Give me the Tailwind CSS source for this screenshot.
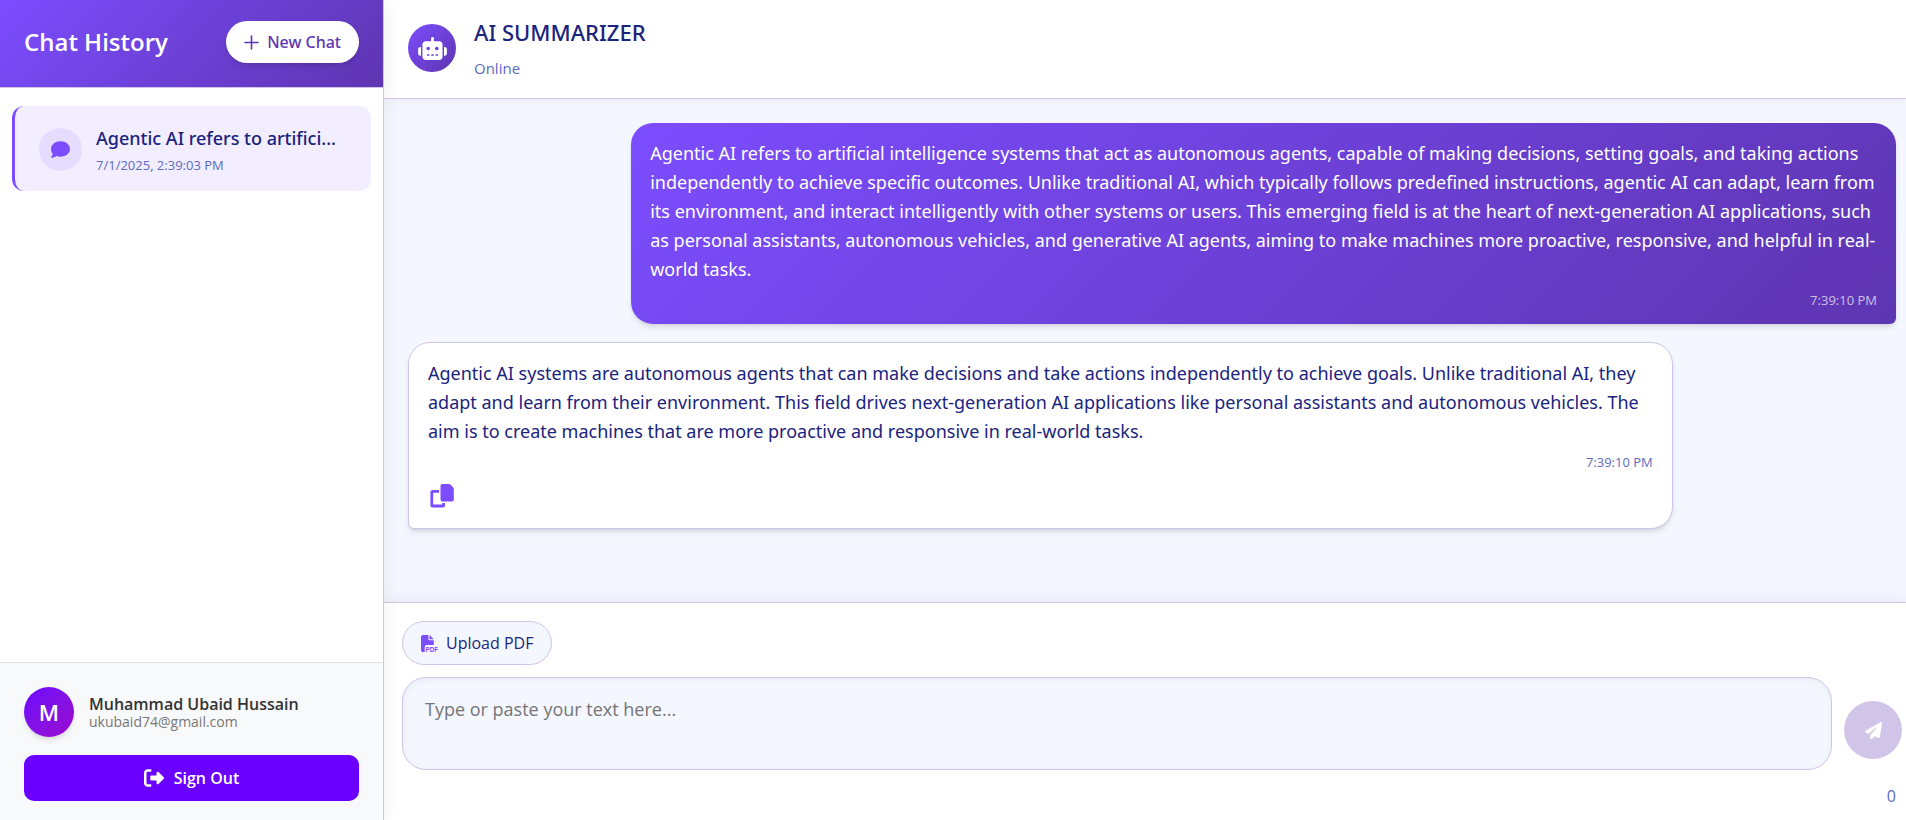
<!DOCTYPE html>
<html lang="en">
  <head>
    <meta charset="UTF-8" />
    <meta name="viewport" content="width=device-width, initial-scale=1.0" />
    <title>AI Summarizer</title>
    <script src="https://cdn.jsdelivr.net/npm/@tailwindcss/browser@4"></script>
  </head>

  <body class="flex h-screen overflow-hidden bg-white font-['Segoe_UI','Open_Sans',sans-serif] text-[#1a237e]">
    <!-- Sidebar -->
    <aside class="relative z-10 flex w-96 shrink-0 flex-col border-r border-[#d1c4e9] bg-white shadow-[2px_0_15px_rgba(0,0,0,0.06)]">
      <div class="flex h-[88px] items-center justify-between border-b border-[#d1c4e9] bg-linear-135 from-[#7c4dff] to-[#5e35b1] px-6 pb-[3px]">
        <h2 class="text-2xl font-semibold text-white">Chat History</h2>
        <button class="flex h-[42px] items-center gap-2 rounded-full bg-white px-[18px] font-['Noto_Sans',sans-serif] text-base font-medium text-[#5e35b1] shadow-md">
          <svg class="h-[15px] w-[15px]" viewBox="0 0 15 15" fill="none" stroke="currentColor" stroke-width="1.6" stroke-linecap="round">
            <path d="M7.5 1v13M1 7.5h13" />
          </svg>
          New Chat
        </button>
      </div>

      <nav class="flex-1 px-3 py-[18px]">
        <a href="#" class="flex items-center gap-[14px] rounded-xl border-l-3 border-[#7c4dff] bg-[#f2edff] pt-4 pr-6 pb-[15px] pl-6">
          <span class="flex h-[43px] w-[43px] shrink-0 items-center justify-center rounded-full bg-[#e6dcff] text-[#7c4dff]">
            <svg class="h-[19px] w-[19px]" viewBox="0 0 512 512" fill="currentColor">
              <path d="M512 240c0 114.9-114.6 208-256 208c-37.1 0-72.3-6.4-104.1-17.9c-11.9 8.7-31.3 20.6-54.3 30.6C73.6 471.1 44.7 480 16 480c-6.5 0-12.3-3.9-14.8-9.9s-1.1-12.8 3.4-17.4c22-24 37-50 43-84C17.700 333 0 288 0 240C0 125.100 114.600 32 256 32s256 93.100 256 208z" />
            </svg>
          </span>
          <span>
            <span class="block font-['Noto_Sans',sans-serif] text-lg leading-8 font-medium whitespace-nowrap">Agentic AI refers to artifici...</span>
            <span class="block text-[13px] leading-[22px] text-[#5c6bc0]">7/1/2025, 2:39:03 PM</span>
          </span>
        </a>
      </nav>

      <div class="border-t border-[#dee2e6] bg-[#f8f9fb] px-6 pt-6 pb-[19px]">
        <div class="flex items-center gap-[15px]">
          <div class="flex h-[50px] w-[50px] items-center justify-center rounded-full bg-linear-135 from-[#6a00ff] to-[#9c00cc] text-[22px] font-semibold text-white shadow-md">M</div>
          <div>
            <p class="text-base leading-5 font-semibold text-[#333333]">Muhammad Ubaid Hussain</p>
            <p class="text-sm leading-4 text-[#777777]">ukubaid74@gmail.com</p>
          </div>
        </div>
        <button class="mt-[18px] flex h-[46px] w-full items-center justify-center gap-[10px] rounded-[10px] bg-[#6a00ff] text-base font-semibold text-white">
          <svg class="h-5 w-5" viewBox="0 0 512 512" fill="currentColor">
            <path d="M377.900 105.900L500.700 228.700c7.200 7.200 11.300 17.100 11.300 27.300s-4.100 20.100-11.300 27.300L377.900 406.100c-6.400 6.400-15 9.900-24 9.900c-18.700 0-33.900-15.200-33.900-33.900l0-62.100-128 0c-17.700 0-32-14.300-32-32l0-64c0-17.700 14.300-32 32-32l128 0 0-62.100c0-18.700 15.200-33.900 33.900-33.900c9 0 17.600 3.600 24 9.900zM160 96L96 96c-17.700 0-32 14.300-32 32l0 256c0 17.700 14.300 32 32 32l64 0c17.700 0 32 14.300 32 32s-14.300 32-32 32l-64 0c-53 0-96-43-96-96L0 128C0 75 43 32 96 32l64 0c17.700 0 32 14.300 32 32s-14.300 32-32 32z" />
          </svg>
          Sign Out
        </button>
      </div>
    </aside>

    <!-- Chat -->
    <main class="flex min-w-0 flex-1 flex-col bg-[#f4f7ff]">
      <header class="relative flex h-[99px] items-center gap-[18px] border-b border-[#d1c4e9] bg-white px-6 pb-0.5 shadow-[0_2px_10px_rgba(0,0,0,0.04)]">
        <div class="flex h-12 w-12 items-center justify-center rounded-full bg-linear-135 from-[#7c4dff] to-[#5e35b1] text-white">
          <svg class="h-[23px] w-[29px]" viewBox="0 0 640 512" fill="currentColor">
            <path d="M320 0c17.700 0 32 14.300 32 32V96H472c39.800 0 72 32.200 72 72V440c0 39.800-32.200 72-72 72H168c-39.800 0-72-32.200-72-72V168c0-39.800 32.200-72 72-72H288V32c0-17.700 14.300-32 32-32zM208 384c-8.800 0-16 7.200-16 16s7.200 16 16 16h32c8.800 0 16-7.200 16-16s-7.200-16-16-16H208zm96 0c-8.800 0-16 7.200-16 16s7.200 16 16 16h32c8.800 0 16-7.200 16-16s-7.200-16-16-16H304zm96 0c-8.800 0-16 7.200-16 16s7.200 16 16 16h32c8.800 0 16-7.200 16-16s-7.200-16-16-16H400zM264 256a40 40 0 1 0 -80 0 40 40 0 1 0 80 0zm152 40a40 40 0 1 0 0-80 40 40 0 1 0 0 80zM48 224H64V416H48c-26.500 0-48-21.500-48-48V272c0-26.500 21.500-48 48-48zm544 0c26.500 0 48 21.500 48 48v96c0 26.500-21.500 48-48 48H576V224h16z" />
          </svg>
        </div>
        <div>
          <h1 class="font-['Noto_Sans',sans-serif] text-[22px] leading-8 font-medium">AI SUMMARIZER</h1>
          <p class="mt-2 text-[15px] leading-6 text-[#5c6bc0]">Online</p>
        </div>
      </header>

      <section class="flex flex-1 flex-col gap-[18px] overflow-hidden py-6 pr-[10px] pl-6">
        <div class="w-[85%] self-end rounded-[22px] rounded-br-md bg-linear-135 from-[#7c4dff] to-[#5e35b1] px-[19px] py-4 text-white shadow-md">
          <p class="font-['Noto_Sans',sans-serif] text-[18px] leading-[29px]">Agentic AI refers to artificial intelligence systems that act as autonomous agents, capable of making decisions, setting goals, and taking actions independently to achieve specific outcomes. Unlike traditional AI, which typically follows predefined instructions, agentic AI can adapt, learn from its environment, and interact intelligently with other systems or users. This emerging field is at the heart of next-generation AI applications, such as personal assistants, autonomous vehicles, and generative AI agents, aiming to make machines more proactive, responsive, and helpful in real-world tasks.</p>
          <p class="mt-2 text-right text-[13px] leading-4 text-white/70">7:39:10 PM</p>
        </div>

        <div class="w-[85%] rounded-[22px] rounded-bl-md border border-[#d1c4e9] bg-white px-[19px] py-4 shadow-md">
          <p class="font-['Noto_Sans',sans-serif] text-[18px] leading-[29px]">Agentic AI systems are autonomous agents that can make decisions and take actions independently to achieve goals. Unlike traditional AI, they adapt and learn from their environment. This field drives next-generation AI applications like personal assistants and autonomous vehicles. The aim is to create machines that are more proactive and responsive in real-world tasks.</p>
          <p class="mt-2 text-right text-[13px] leading-4 text-[#5c6bc0]">7:39:10 PM</p>
          <button aria-label="Copy" class="mt-[14px] mb-1 ml-0.5 block text-[#7c4dff]">
            <svg class="h-6 w-6" viewBox="0 0 24 24" fill="currentColor">
              <path d="M12.500 0h6.500q.8 0 1.400.6l2.800 2.800q.6.600.6 1.400v10.700q0 2-2 2h-9.300q-2 0-2-2V2q0-2 2-2z" />
              <path d="M2 6h7v2.800H3.200v11.700h9V19H15v2.500q0 2-2 2H2.400q-2 0-2-2V8q0-2 2-2z" />
            </svg>
          </button>
        </div>
      </section>

      <!-- Composer -->
      <footer class="border-t border-[#d1c4e9] bg-white pt-[18px] pr-1 pl-[18px] shadow-[0_-2px_15px_rgba(0,0,0,0.06)]">
        <button class="flex h-11 items-center gap-2 rounded-full border border-[#d1c4e9] bg-[#f4f7ff] px-[18px] text-base">
          <svg class="h-[17px] w-[17px] text-[#7c4dff]" viewBox="0 0 512 512" fill="currentColor">
            <path d="M0 64C0 28.700 28.700 0 64 0L224 0l0 128c0 17.700 14.300 32 32 32l128 0 0 144-208 0c-35.300 0-64 28.700-64 64l0 144-48 0c-35.300 0-64-28.700-64-64L0 64zm384 64l-128 0L256 0 384 128z" />
            <text x="135" y="508" font-family="Liberation Sans" font-size="190" font-weight="700">PDF</text>
          </svg>
          Upload PDF
        </button>
        <div class="mt-3 flex items-end gap-3">
          <textarea aria-label="Message" placeholder="Type or paste your text here..." class="h-[93px] flex-1 resize-none rounded-3xl border border-[#d1c4e9] bg-[#f4f7ff] px-[22px] py-[17px] text-[18px] leading-7 shadow-[inset_0_2px_6px_rgba(0,0,0,0.05)] placeholder:text-[#757575]"></textarea>
          <button aria-label="Send" class="mb-[11px] flex h-[58px] w-[58px] items-center justify-center rounded-full bg-[#d1c4e9] text-white">
            <svg class="h-[17px] w-[17px]" viewBox="0 0 512 512" fill="currentColor">
              <path d="M498.100 5.600c10.100 7 15.400 19.100 13.500 31.200l-64 416c-1.500 9.700-7.400 18.200-16 23s-18.900 5.400-28 1.600L284 427.700l-68.500 74.100c-8.900 9.700-22.900 12.900-35.200 8.100S160 493.200 160 480V396.400c0-4 1.500-7.800 4.200-10.700L331.800 202.800c5.800-6.300 5.600-16-.4-22s-15.700-6.400-22-.7L106 360.800 17.700 316.600C7.100 311.300 .3 300.700 0 288.900s5.900-22.800 16.100-28.700l448-256c10.700-6.100 23.900-5.500 34 1.400z" />
            </svg>
          </button>
        </div>
        <p class="mt-[14px] mb-3 pr-1.5 text-right text-base leading-6 text-[#5c6bc0]">0</p>
      </footer>
    </main>
  </body>
</html>
